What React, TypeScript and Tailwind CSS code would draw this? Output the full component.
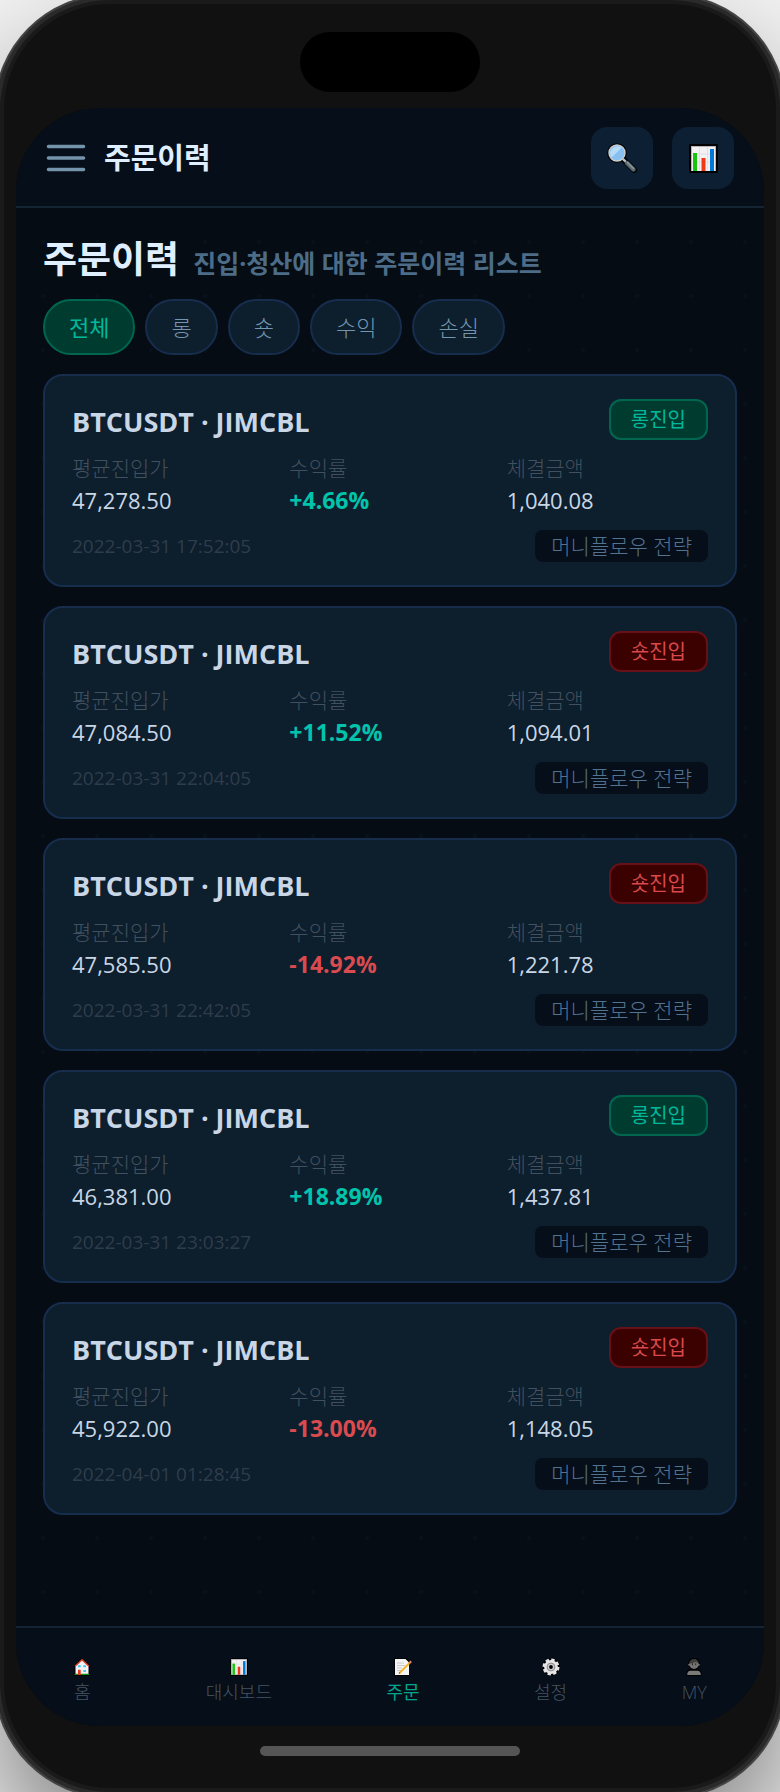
import { useState } from "react";

type Side = "long" | "short";

interface Order {
  id: number;
  symbol: string;
  side: Side;
  entry: string;
  rate: string;
  amount: string;
  time: string;
  strategy: string;
}

const ORDERS: Order[] = [
  { id: 1, symbol: "BTCUSDT · JIMCBL", side: "long", entry: "47,278.50", rate: "+4.66%", amount: "1,040.08", time: "2022-03-31 17:52:05", strategy: "머니플로우 전략" },
  { id: 2, symbol: "BTCUSDT · JIMCBL", side: "short", entry: "47,084.50", rate: "+11.52%", amount: "1,094.01", time: "2022-03-31 22:04:05", strategy: "머니플로우 전략" },
  { id: 3, symbol: "BTCUSDT · JIMCBL", side: "short", entry: "47,585.50", rate: "-14.92%", amount: "1,221.78", time: "2022-03-31 22:42:05", strategy: "머니플로우 전략" },
  { id: 4, symbol: "BTCUSDT · JIMCBL", side: "long", entry: "46,381.00", rate: "+18.89%", amount: "1,437.81", time: "2022-03-31 23:03:27", strategy: "머니플로우 전략" },
  { id: 5, symbol: "BTCUSDT · JIMCBL", side: "short", entry: "45,922.00", rate: "-13.00%", amount: "1,148.05", time: "2022-04-01 01:28:45", strategy: "머니플로우 전략" },
];

const FILTERS = ["전체", "롱", "숏", "수익", "손실"];

function matches(order: Order, filter: string) {
  if (filter === "롱") return order.side === "long";
  if (filter === "숏") return order.side === "short";
  if (filter === "수익") return order.rate.startsWith("+");
  if (filter === "손실") return order.rate.startsWith("-");
  return true;
}

function MenuIcon() {
  return (
    <svg viewBox="0 0 40 30" className="h-[30px] w-10" stroke="#7394ab" strokeWidth="3.6" strokeLinecap="round">
      <path d="M2.5 3.5h35M2.5 15h35M2.5 26.5h35" />
    </svg>
  );
}

function SearchIcon() {
  return (
    <svg viewBox="0 0 30 30" className="size-[30px]" strokeLinecap="round">
      <path d="M17 17l10 10" stroke="#000" strokeWidth="6" />
      <circle cx="10" cy="10" r="9.8" fill="#000" />
      <path d="M16.500 16.500l3 3" stroke="#b9c4ca" strokeWidth="2.400" />
      <path d="M20 20l6.500 6.500" stroke="#5b696f" strokeWidth="4.400" />
      <path d="M20.500 19.500l6 6" stroke="#8b9a9f" strokeWidth="1.400" />
      <circle cx="10" cy="10" r="8" fill="#86bff0" stroke="#c9cdd0" strokeWidth="1.400" />
      <path d="M4.500 14.500A7.200 7.200 0 0 1 14.800 4.800z" fill="#b5dbf7" />
    </svg>
  );
}

function ChartIcon({ className }: { className: string }) {
  return (
    <svg viewBox="0 0 29 29" className={className}>
      <rect width="29" height="29" rx="1" fill="#000" />
      <rect x="2" y="2" width="25" height="25" fill="#f3f1f4" />
      <path d="M2 2.500h25M2.500 2v25M26.500 2v25" stroke="#b8b4ba" />
      <path d="M2 10h25M2 18h25M10.500 3v24M18.500 3v24" stroke="#dedce0" strokeWidth="0.800" />
      <rect x="4" y="9" width="4" height="18" fill="#16c60c" />
      <rect x="12.500" y="14" width="4" height="13" fill="#f03a17" />
      <rect x="21" y="5" width="4" height="22" fill="#0078d7" />
    </svg>
  );
}

function HomeIcon() {
  return (
    <svg viewBox="0 0 18 18" className="size-[18px]">
      <path d="M9 0L1.300 7.500V15H.5v2.600h17V15h-.8V7.500z" fill="#000" />
      <path d="M9 2L2.500 8.200V16h13V8.200z" fill="#f4f2f5" />
      <path d="M2 8.300L9 1.700l7 6.600" fill="none" stroke="#e0452a" strokeWidth="1.300" />
      <path d="M5 7.200h2.700v2H5zM10.300 7.200H13v2h-2.700zM10.300 12H13v2h-2.700z" fill="#3fc8f4" />
      <path d="M1.500 15.800h15v1.200h-15z" fill="#12911a" />
      <path d="M5 11.800h2.700V17H5z" fill="#e8391c" />
    </svg>
  );
}

function MemoIcon() {
  return (
    <svg viewBox="0 0 18 18" className="size-[18px]">
      <path d="M0 0h12l3 2.500L18 3v2l-3 3v10H0z" fill="#000" />
      <path d="M1 1h10.500L15 4.500V17H1z" fill="#f5f4f6" />
      <path d="M3 5h7M3 7.500h8M3 10h5M3 12.500h4" stroke="#c6c4c8" strokeWidth="0.900" />
      <path d="M5.500 15L15.500 5" stroke="#f7b52c" strokeWidth="2" />
      <path d="M15.500 5l1.700-1.700" stroke="#e9806e" strokeWidth="2.200" />
      <path d="M5 15.500l1-1" stroke="#8c6d3c" strokeWidth="1.500" />
    </svg>
  );
}

function GearIcon() {
  return (
    <svg viewBox="0 0 18 18" className="size-[18px]">
      <circle cx="9" cy="9" r="7.200" fill="none" stroke="#000" strokeWidth="3.400" />
      <circle cx="9" cy="9" r="7.300" fill="none" stroke="#e6e4e7" strokeWidth="2.400" strokeDasharray="3.440 2.293" />
      <circle cx="9" cy="9" r="6.900" fill="#e6e4e7" />
      <circle cx="9" cy="9" r="3.900" fill="#cfcdd0" stroke="#77767a" strokeWidth="0.800" />
      <circle cx="9" cy="9" r="1.900" fill="#000" />
    </svg>
  );
}

function PersonIcon() {
  return (
    <svg viewBox="0 0 18 18" className="size-[18px]">
      <path d="M9 0c3.600 0 6 2 6 5.500 0 2.500-1 4.300-2.300 5.500 2.400.5 3.800 2 3.800 4.500V18h-15v-2.500c0-2.500 1.400-4 3.800-4.500C4 9.800 3 8 3 5.500 3 2 5.400 0 9 0z" fill="#000" />
      <circle cx="9" cy="6.300" r="4.700" fill="#737373" />
      <circle cx="4.200" cy="6.800" r="1" fill="#737373" />
      <circle cx="13.800" cy="6.800" r="1" fill="#737373" />
      <path d="M4.300 5.800C4.300 2.700 6.200 1 9 1s4.700 1.700 4.700 4.800L11 3.800C9 5.300 6.500 5.200 4.300 5.800z" fill="#3d3d3d" />
      <path d="M7.500 5.300v1.900M10.700 5.300v1.900" stroke="#2a2a2a" />
      <path d="M2.200 17c0-2.800 1.300-4.200 3.300-4.200h7c2 0 3.300 1.400 3.300 4.200z" fill="#7a7a7a" />
    </svg>
  );
}

const NAV = [
  { label: "홈", icon: <HomeIcon /> },
  { label: "대시보드", icon: <ChartIcon className="size-[18px]" /> },
  { label: "주문", icon: <MemoIcon />, active: true },
  { label: "설정", icon: <GearIcon /> },
  { label: "MY", icon: <PersonIcon /> },
];

function OrderCard({ order }: { order: Order }) {
  const isLong = order.side === "long";
  const isProfit = order.rate.startsWith("+");

  return (
    <article className="rounded-[20px] border-2 border-[#172d4d] bg-[#0d1e2d] px-[27px] py-[23px]">
      <div className="flex items-end justify-between">
        <h2 className="text-[27px] leading-9 font-bold text-[#c8d6e5]">{order.symbol}</h2>
        <span
          className={
            isLong
              ? "rounded-xl border-2 border-[#006650] bg-[#003b2f] px-5 text-[20px] leading-[37px] text-[#00b89c]"
              : "rounded-xl border-2 border-[#661018] bg-[#3b0000] px-5 text-[20px] leading-[37px] text-[#d9494b]"
          }
        >
          {isLong ? "롱진입" : "숏진입"}
        </span>
      </div>

      <dl className="mt-3 grid grid-cols-3 gap-4 leading-8">
        <div>
          <dt className="text-[21px] font-light text-[#40505e]">평균진입가</dt>
          <dd className="text-[22px] text-[#c8d6e5]">{order.entry}</dd>
        </div>
        <div>
          <dt className="text-[21px] font-light text-[#40505e]">수익률</dt>
          <dd className={isProfit ? "text-[23px] font-bold text-[#00c4ab]" : "text-[23px] font-bold text-[#d94b4f]"}>
            {order.rate}
          </dd>
        </div>
        <div>
          <dt className="text-[21px] font-light text-[#40505e]">체결금액</dt>
          <dd className="text-[22px] text-[#c8d6e5]">{order.amount}</dd>
        </div>
      </dl>

      <div className="mt-[14px] flex items-center justify-between">
        <time className="text-[19px] leading-8 text-[#2e3d4a]">{order.time}</time>
        <span className="rounded-lg bg-[#060e1a] px-4 text-[21px] font-light leading-8 text-[#537290]">
          {order.strategy}
        </span>
      </div>
    </article>
  );
}

export default function App() {
  const [filter, setFilter] = useState("전체");

  return (
    <div className="min-h-screen overflow-hidden bg-[#f2f2f2] font-['Open_Sans','Noto_Sans_CJK_KR',sans-serif]">
      <div className="relative flex min-h-screen flex-col rounded-[110px] border-4 border-[#1a1a1a] bg-[#111] px-3 pt-[104px] pb-[62px] shadow-[0_0_0_4px_#2a2a2a,0_0_0_6px_#444,0_60px_120px_rgba(0,0,0,0.5)]">
        <div className="absolute top-7 left-1/2 h-[60px] w-[180px] -translate-x-1/2 rounded-full bg-black" />

        <div className="flex flex-1 flex-col overflow-hidden rounded-[84px] bg-[#050c14]">
          <header className="flex h-[100px] items-center justify-between border-b-2 border-[#152433] bg-[#060e19] px-[30px] pt-[2px]">
            <div className="flex items-center gap-[18px]">
              <button type="button" aria-label="메뉴">
                <MenuIcon />
              </button>
              <span className="text-[29px] font-bold text-[#e0efff]">주문이력</span>
            </div>
            <div className="flex gap-[19px]">
              <button type="button" aria-label="검색" className="flex size-[62px] items-center justify-center rounded-2xl bg-[#0d1f33]">
                <SearchIcon />
              </button>
              <button type="button" aria-label="통계" className="flex size-[62px] items-center justify-center rounded-2xl bg-[#0d1f33]">
                <ChartIcon className="size-[29px]" />
              </button>
            </div>
          </header>

          <main className="flex-1 bg-[radial-gradient(circle,#08111c_1px,transparent_3px)] bg-[size:54px_54px] bg-[position:0px_7px] px-[27px] pt-[27px] pb-8">
            <div className="flex items-baseline gap-[14px] leading-[48px]">
              <h1 className="text-[37px] font-bold text-[#e0efff]">주문이력</h1>
              <p className="text-[25px] font-bold text-[#4c6c88]">진입·청산에 대한 주문이력 리스트</p>
            </div>

            <div className="mt-3 flex gap-[10px]">
              {FILTERS.map((name) => (
                <button
                  key={name}
                  type="button"
                  onClick={() => setFilter(name)}
                  className={
                    filter === name
                      ? "h-14 rounded-full border-2 border-[#006650] bg-[#003b2f] px-6 text-[22px] text-[#00b89c]"
                      : "h-14 rounded-full border-2 border-[#172d4d] bg-[#0d1e2d] px-6 text-[22px] font-light text-[#7595af]"
                  }
                >
                  {name}
                </button>
              ))}
            </div>

            <div className="mt-[19px] flex flex-col gap-[19px]">
              {ORDERS.filter((order) => matches(order, filter)).map((order) => (
                <OrderCard key={order.id} order={order} />
              ))}
            </div>
          </main>

          <nav className="flex h-[100px] items-center justify-around border-t-2 border-[#152433] bg-[#060e19] pt-[7px]">
            {NAV.map(({ label, icon, active }) => (
              <a
                key={label}
                href="#"
                className={
                  active
                    ? "flex flex-col items-center gap-1 text-[18px] leading-6 text-[#00a58e]"
                    : "flex flex-col items-center gap-1 text-[18px] font-light leading-6 text-[#455563]"
                }
              >
                {icon}
                {label}
              </a>
            ))}
          </nav>
        </div>

        <div className="absolute bottom-8 left-1/2 h-[10px] w-[260px] -translate-x-1/2 rounded-full bg-[#555]" />
      </div>
    </div>
  );
}
